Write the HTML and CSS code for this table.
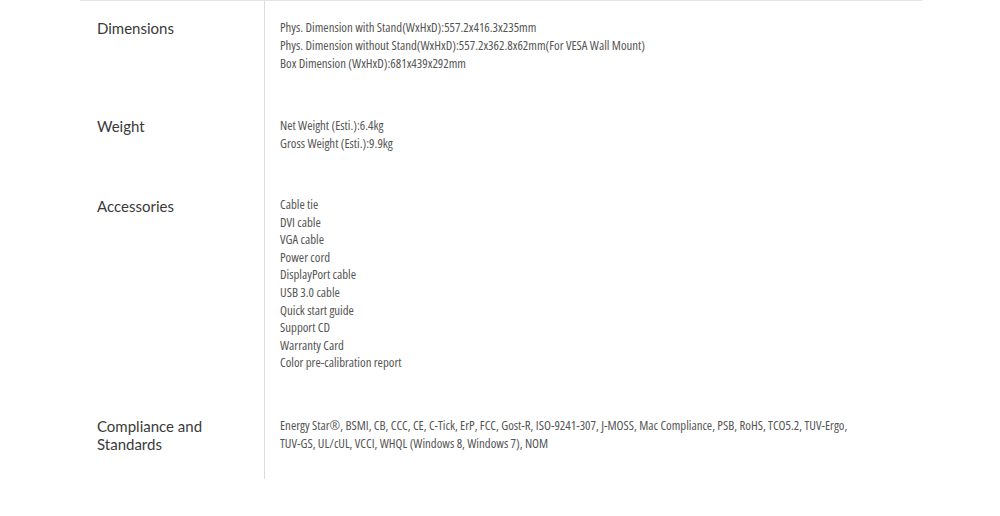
FILE: index.html
```html
<!DOCTYPE html>
<html lang="en">

<head>
    <meta charset="UTF-8">
    <meta name="viewport" content="width=device-width, initial-scale=1.0">
    <title>Specifications</title>
    <link rel="stylesheet" href="styles.css">
</head>

<body>
    <main class="specs">
        <section class="spec-row">
            <h2 class="spec-name">Dimensions</h2>
            <div class="spec-value">
                <p>Phys. Dimension with Stand(WxHxD):557.2x416.3x235mm</p>
                <p>Phys. Dimension without Stand(WxHxD):557.2x362.8x62mm(For VESA Wall Mount)</p>
                <p>Box Dimension (WxHxD):681x439x292mm</p>
            </div>
        </section>
        <section class="spec-row">
            <h2 class="spec-name">Weight</h2>
            <div class="spec-value">
                <p>Net Weight (Esti.):6.4kg</p>
                <p>Gross Weight (Esti.):9.9kg</p>
            </div>
        </section>
        <section class="spec-row">
            <h2 class="spec-name">Accessories</h2>
            <div class="spec-value list">
                <p>Cable tie</p>
                <p>DVI cable</p>
                <p>VGA cable</p>
                <p>Power cord</p>
                <p>DisplayPort cable</p>
                <p>USB 3.0 cable</p>
                <p>Quick start guide</p>
                <p>Support CD</p>
                <p>Warranty Card</p>
                <p>Color pre-calibration report</p>
            </div>
        </section>
        <section class="spec-row">
            <h2 class="spec-name">Compliance and<br>Standards</h2>
            <div class="spec-value">
                <p>Energy Star®, BSMI, CB, CCC, CE, C-Tick, ErP, FCC, Gost-R, ISO-9241-307, J-MOSS, Mac Compliance, PSB, RoHS, TCO5.2, TUV-Ergo,<br>TUV-GS, UL/cUL, VCCI, WHQL (Windows 8, Windows 7), NOM</p>
            </div>
        </section>
    </main>
</body>

</html>
```

FILE: styles.css
```css
body {
    margin: 0;
    padding: 0;
    background: #fff;
    font-family: "Open Sans", "DejaVu Sans Condensed", sans-serif;
}

.specs {
    width: 842px;
    margin-left: 80px;
    border-top: 1px solid #e4e4e4;
}

.spec-row {
    display: flex;
}

.spec-name {
    width: 167px;
    flex-shrink: 0;
    margin: 0;
    padding: 18px 0 26px 17px;
    font-family: Lato, "Open Sans", sans-serif;
    font-size: 15px;
    font-weight: 400;
    line-height: 18px;
    color: #3a3a3a;
    border-right: 1px solid #dcdcdc;
}

.spec-value {
    padding: 17px 0 27px 15px;
    font-size: 12.8px;
    font-stretch: 75%;
    line-height: 18px;
    color: #555;
    white-space: nowrap;
}

.spec-value p {
    margin: 0;
}

.spec-value.list {
    line-height: 17.6px;
}
```
